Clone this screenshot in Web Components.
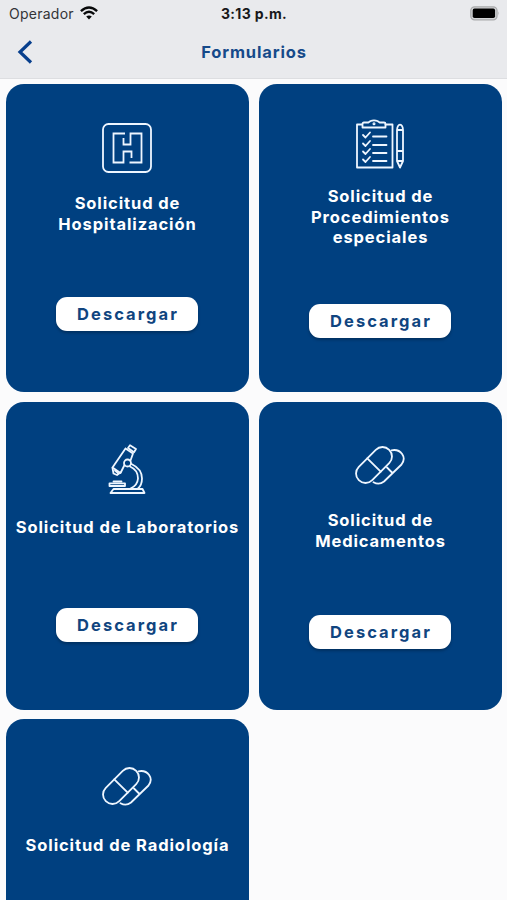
<!DOCTYPE html>
<html lang="es">
<head>
  <meta charset="utf-8">
  <title>Formularios</title>
  <style>
    body {
      margin: 0;
      height: 900px;
      overflow: hidden;
      background: #fbfbfc;
      font-family: Inter, "Liberation Sans", sans-serif;
    }
  </style>
</head>
<body>

<template id="statusBarTemplate">
  <style>
    :host { display: grid; grid-template-columns: 1fr auto 1fr; align-items: center; height: 27px; padding: 0 7px 0 9px; font-size: 14px; color: #17181a; }
    .carrier { display: flex; align-items: center; gap: 6px; color: #333437; letter-spacing: 0.25px; }
    .time { padding-right: 1px; font-weight: 700; letter-spacing: 0.35px; }
    .battery { justify-self: end; }
    svg { display: block; }
    .carrier svg { margin-top: -1px; }
  </style>
  <div class="carrier">
    <slot name="carrier"></slot>
    <svg width="18" height="14" viewBox="0 0 18 14" fill="none" stroke="#08090a" stroke-width="2.4">
      <path d="M.9 5.1Q9-2.1 17.1 5.1M3.8 8.1Q9 3.6 14.2 8.1"/>
      <path d="M9 13.4 6.2 10.6Q9 8.3 11.8 10.6Z" fill="#08090a" stroke="none"/>
    </svg>
  </div>
  <div class="time"><slot name="time"></slot></div>
  <svg class="battery" width="30" height="15" viewBox="0 0 30 15">
    <rect x=".8" y=".8" width="26.2" height="13" rx="3.8" fill="#d4d5d7" stroke="#a9aaac" stroke-width="1.3"/>
    <rect x="2.7" y="2.6" width="22.4" height="9.4" rx="1.8" fill="#000"/>
    <path d="M28.3 5.2q1.6 2.1 0 4.2Z" fill="#a9aaac"/>
  </svg>
</template>

<template id="navBarTemplate">
  <style>
    :host { display: grid; grid-template-columns: 1fr auto 1fr; align-items: center; height: 51px; padding: 0 0 2px 17px; box-sizing: border-box; }
    h1 { margin: 0; padding-right: 16px; font-size: 16.5px; font-weight: 700; letter-spacing: 0.85px; color: #164a8a; }
    svg { display: block; }
  </style>
  <svg width="17" height="24" viewBox="0 0 17 24" fill="none" stroke="#073f8d" stroke-width="3.2">
    <path d="M14 1.5 3 12 14 22.5"/>
  </svg>
  <h1><slot></slot></h1>
</template>

<template id="formIconTemplate">
  <style>
    :host { display: block; width: 50px; height: 50px; }
    svg { display: block; fill: none; stroke: #eef6ff; stroke-width: 1.8; stroke-linecap: round; stroke-linejoin: round; }
  </style>
  <svg width="50" height="50" viewBox="0 0 50 50"></svg>
</template>

<template id="formCardTemplate">
  <style>
    :host { display: flex; flex-direction: column; align-items: center; height: 308px; border-radius: 18px; background: #004080; }
    /* card at the fold: only its upper part shows */
    :host([partial]) { height: 181px; border-radius: 18px 18px 0 0; }
    :host([partial]) .art { flex: none; padding-top: 43px; padding-bottom: 23px; }
    :host([partial]) .action { display: none; }
    .art { flex: 1 0 auto; display: flex; align-items: center; padding-top: 19px; margin-left: -1px; }
    h2 { margin: 0; padding: 0 6px; font-size: 16.5px; line-height: 20.8px; font-weight: 700; letter-spacing: 0.9px; text-align: center; color: #fff; }
    .action { flex: 2 0 auto; display: flex; align-items: center; padding: 23px 0 21px; }
    button { width: 142px; height: 34px; margin-right: 1px; padding: 0 0 0 2px; border: 0; border-radius: 11px; background: #fff; box-shadow: 0 2px 3px rgba(0, 0, 0, .25); font: 700 16.5px Inter, "Liberation Sans", sans-serif; letter-spacing: 2.04px; color: #10457f; }
  </style>
  <div class="art"><form-icon></form-icon></div>
  <h2><slot></slot></h2>
  <div class="action"></div>
</template>

<template id="formsPageTemplate">
  <style>
    :host { display: block; }
    header { background: #e9eaed; border-bottom: 1px solid #dddee1; }
    main { display: grid; grid-template-columns: 243px 243px; gap: 9.7px 10px; padding: 5px 0 0 6px; }
  </style>
  <header><slot name="header"></slot></header>
  <main><slot></slot></main>
</template>

<forms-page>
  <status-bar slot="header">
    <span slot="carrier">Operador</span>
    <span slot="time">3:13 p.m.</span>
  </status-bar>
  <nav-bar slot="header">Formularios</nav-bar>

  <form-card icon="hospital">Solicitud de<br>Hospitalización</form-card>
  <form-card icon="clipboard">Solicitud de<br>Procedimientos<br>especiales</form-card>
  <form-card icon="microscope">Solicitud de Laboratorios</form-card>
  <form-card icon="pills">Solicitud de<br>Medicamentos</form-card>
  <form-card icon="pills" partial>Solicitud de Radiología</form-card>
</forms-page>

<script>
const icons = {
  hospital: `
    <rect x="1" y="1" width="48" height="48" rx="5.5"/>
    <path stroke-linecap="butt" stroke-linejoin="miter" d="M23 10.5H11.5V39.5H21.5V28.5H29.5V35M27.5 39.5H39.5V10.5H28.5V21.5H21.5V15"/>`,
  clipboard: `
    <path d="M7 5.5H2V48.5H37.5V5.5H30.5"/>
    <path d="M7.5 8.5V5q0-1.500 1.500-1.500H13.5Q15 1.300 19 1.300T24.5 3.500h4.500q1.500 0 1.500 1.500V8.5Z"/>
    <circle cx="19" cy="4.8" r=".6"/>
    <path d="M8 16 10.5 18.5 15 13.5M8 24.5 10.5 27 15 22M8 32.5 10.5 35 15 30M8 40.5 10.5 43 15 38M18 17.5H31.5M18 26H31.5M18 34H31.5M18 42H31.5"/>
    <path d="M42 11Q42.5 6 45 5.7 47.7 6 48 11V42L45 48.5 42 42ZM42 11H48M42 32H48M42 42H48"/>`,
  microscope: `
    <path d="M23.5 4.5 10.5 23.5 18.5 29 22.5 21M28.5 16.5 31 9.5 23.5 4.5"/>
    <path d="M26 4 28 1.3 34 5 32 8.3Z"/>
    <path d="M10.5 24 11.5 29.5 15 31 18.5 28.5M13 26.5 16 29"/>
    <circle cx="25.5" cy="19" r="3.5"/>
    <path d="M29.5 20Q40 25 40 34.5 40 41 36 44.5M28 22.5Q36 26 36 34.5 35.5 41.5 28.5 44.5"/>
    <rect x="7.5" y="39.3" width="15.5" height="2.7"/>
    <path d="M11.5 37.5H19.5M11.5 45H40.5L42.5 49H8.5Z"/>`,
  pills: `
    <g transform="rotate(-45 19 24)">
      <rect x="-2.5" y="14.5" width="43" height="19" rx="9.5"/>
      <path d="M19 14.5V33.5"/>
    </g>
    <path d="M36.5 9.3C46 7.5 52 16.5 46.5 23.5L29 40.5Q24 44.5 18.5 41.2M32 26.5 37.5 32"/>`
};

// clones a template of this page into an open shadow root
function attachTemplate(element, id) {
  const template = document.getElementById(id);
  element.attachShadow({mode: 'open'}).appendChild(template.content.cloneNode(true));
}

customElements.define('status-bar', class extends HTMLElement {
  constructor() {
    super();
    attachTemplate(this, 'statusBarTemplate');
  }
});

customElements.define('nav-bar', class extends HTMLElement {
  constructor() {
    super();
    attachTemplate(this, 'navBarTemplate');
  }
});

customElements.define('form-icon', class extends HTMLElement {
  static get observedAttributes() { return ['name']; }
  constructor() {
    super();
    attachTemplate(this, 'formIconTemplate');
  }
  attributeChangedCallback(attr, oldValue, value) {
    this.shadowRoot.querySelector('svg').innerHTML = icons[value] || '';
  }
});

customElements.define('form-card', class extends HTMLElement {
  constructor() {
    super();
    attachTemplate(this, 'formCardTemplate');
  }
  connectedCallback() {
    this.shadowRoot.querySelector('form-icon').setAttribute('name', this.getAttribute('icon'));
    if (!this.hasAttribute('partial')) {
      this.shadowRoot.querySelector('.action').innerHTML = '<button type="button">Descargar</button>';
    }
  }
});

customElements.define('forms-page', class extends HTMLElement {
  constructor() {
    super();
    attachTemplate(this, 'formsPageTemplate');
  }
});
</script>

</body>
</html>
